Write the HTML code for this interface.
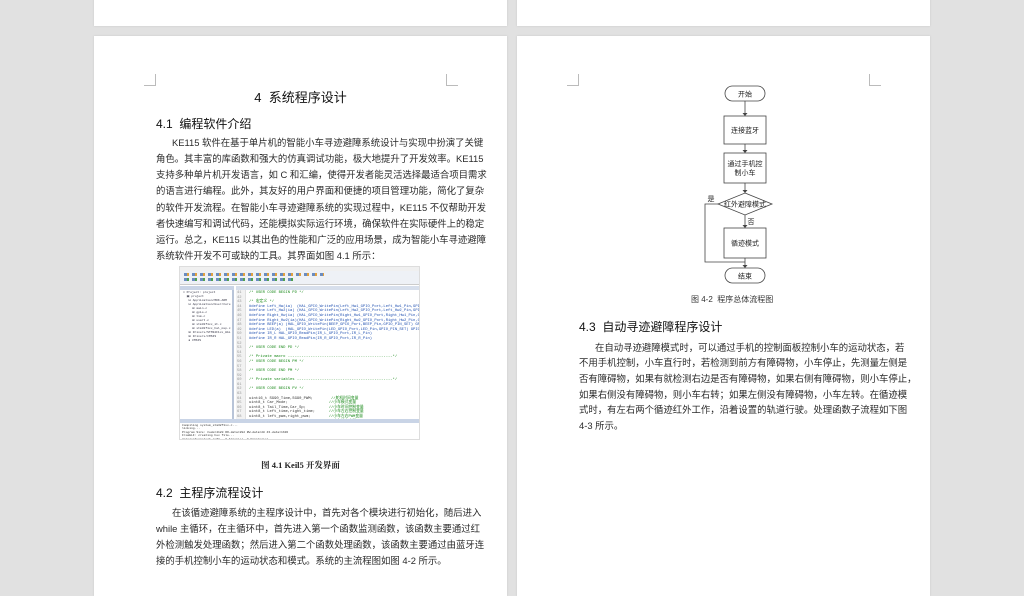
<!DOCTYPE html>
<html><head><meta charset="utf-8"><style>
*{margin:0;padding:0;box-sizing:border-box}
body{width:1024px;height:575px;background:#e1e1e1;position:relative;overflow:hidden;font-family:"Liberation Sans","Noto Sans CJK SC",sans-serif;color:#222}
.pg{position:absolute;background:#fff;box-shadow:0 0 2px #c8c8c8}
.a{position:absolute;white-space:nowrap}
.l{position:absolute;font-size:9.4px;line-height:12px;white-space:nowrap;text-align:justify;text-align-last:justify;color:#2a2a2a}
.l.e{text-align-last:left}
.h{position:absolute;font-family:"Liberation Sans","Noto Sans CJK SC",sans-serif;font-size:12px;color:#111;white-space:nowrap}
.cm{position:absolute;width:12px;height:12px;border-color:#bbb;border-style:solid;border-width:0}
.code{position:absolute;font-family:"Liberation Mono",monospace;font-size:3.8px;line-height:4.6px;white-space:pre;color:#1a8a1a}
</style></head><body>
<div class="pg" style="left:94px;top:-5px;width:413px;height:31px"></div>
<div class="pg" style="left:517px;top:-5px;width:413px;height:31px"></div>
<div class="pg" style="left:94px;top:36px;width:413px;height:560px"></div>
<div class="pg" style="left:517px;top:36px;width:413px;height:560px"></div>
<div class="cm" style="left:144px;top:74px;border-right-width:1px;border-bottom-width:1px"></div>
<div class="cm" style="left:446px;top:74px;border-left-width:1px;border-bottom-width:1px"></div>
<div class="cm" style="left:567px;top:74px;border-right-width:1px;border-bottom-width:1px"></div>
<div class="cm" style="left:869px;top:74px;border-left-width:1px;border-bottom-width:1px"></div>

<div class="h" style="left:0;width:601px;text-align:center;top:87px;font-size:13px">4&nbsp; 系统程序设计</div>
<div class="h" style="left:156px;top:115px">4.1&nbsp; 编程软件介绍</div>
<div class="l" style="left:172px;width:278px;top:137px">KE115 软件在基于单片机的智能小车寻迹避障系统设计与实现中扮演了关键</div>
<div class="l" style="left:156px;width:294px;top:153px">角色。其丰富的库函数和强大的仿真调试功能，极大地提升了开发效率。KE115</div>
<div class="l" style="left:156px;width:294px;top:169px">支持多种单片机开发语言，如 C 和汇编，使得开发者能灵活选择最适合项目需求</div>
<div class="l" style="left:156px;width:294px;top:185px">的语言进行编程。此外，其友好的用户界面和便捷的项目管理功能，简化了复杂</div>
<div class="l" style="left:156px;width:294px;top:202px">的软件开发流程。在智能小车寻迹避障系统的实现过程中，KE115 不仅帮助开发</div>
<div class="l" style="left:156px;width:294px;top:218px">者快速编写和调试代码，还能模拟实际运行环境，确保软件在实际硬件上的稳定</div>
<div class="l" style="left:156px;width:294px;top:234px">运行。总之，KE115 以其出色的性能和广泛的应用场景，成为智能小车寻迹避障</div>
<div class="l e" style="left:156px;width:294px;top:250px">系统软件开发不可或缺的工具。其界面如图 4.1 所示：</div>

<div style="position:absolute;left:179px;top:266px;width:241px;height:174px;background:#fff;border:1px solid #ddd;overflow:hidden">
 <div style="position:absolute;left:0;top:0;width:241px;height:4px;background:#f0f0f0"></div>
 <div style="position:absolute;left:0;top:4px;width:241px;height:14px;background:#eef1f6;border-bottom:1px solid #ccc"></div>
 <div style="position:absolute;left:4px;top:6px;width:140px;height:3px;background:repeating-linear-gradient(90deg,#6a8cc0 0 3px,#e0a040 3px 5px,transparent 5px 8px)"></div>
 <div style="position:absolute;left:4px;top:11px;width:110px;height:3px;background:repeating-linear-gradient(90deg,#6a8cc0 0 3px,#50a050 3px 5px,transparent 5px 8px)"></div>
 <div style="position:absolute;left:0;top:19px;width:54px;height:133px;background:#fff;border-right:2px solid #b8c4d8"></div>
 <div style="position:absolute;left:0;top:19px;width:54px;height:4px;background:#c9d4e6"></div>
 <div class="code" style="left:3px;top:24px;color:#334;font-size:3px;line-height:4px">□ Project: project
  ▣ project
   ⊟ Application/MDK-ARM
   ⊟ Application/User/Core
     ⊞ main.c
     ⊞ gpio.c
     ⊞ tim.c
     ⊞ usart.c
     ⊞ stm32f1xx_it.c
     ⊞ stm32f1xx_hal_msp.c
   ⊞ Drivers/STM32F1xx_HAL
   ⊞ Drivers/CMSIS
   ● CMSIS</div>
 <div style="position:absolute;left:56px;top:19px;width:185px;height:4px;background:#d7dfec"></div>
 <div style="position:absolute;left:56px;top:23px;width:10px;height:129px;background:#f2f2f2;border-right:1px solid #e0e0e0"></div>
 <div style="position:absolute;left:56px;top:23px;width:185px;height:129px;overflow:hidden">
 <div class="code" style="left:1px;top:1px;color:#999">41
42
43
44
45
46
47
48
49
50
51
52
53
54
55
56
57
58
59
60
61
62
63
64
65
66
67
68
69
70
71
72
73
74
75
76
77</div>
 <div class="code" style="left:13px;top:1px">/* USER CODE BEGIN PD */

/* 宏定义 */
<span style="color:#2050b0">#define Left_Hw(ia)  (HAL_GPIO_WritePin(Left_Hw1_GPIO_Port,Left_Hw1_Pin,GPIO_PIN_SET) GPIO</span>
<span style="color:#2050b0">#define Left_Hw2(ia) (HAL_GPIO_WritePin(Left_Hw2_GPIO_Port,Left_Hw2_Pin,GPIO_PIN_SET) GPIO</span>
<span style="color:#2050b0">#define Right_Hw(ia) (HAL_GPIO_WritePin(Right_Hw1_GPIO_Port,Right_Hw1_Pin,GPIO_PIN_SET) GP</span>
<span style="color:#2050b0">#define Right_Hw2(ia)(HAL_GPIO_WritePin(Right_Hw2_GPIO_Port,Right_Hw2_Pin,GPIO_PIN_SET) G</span>
<span style="color:#2050b0">#define BEEP(a) (HAL_GPIO_WritePin(BEEP_GPIO_Port,BEEP_Pin,GPIO_PIN_SET) GPIO_WritePin</span>
<span style="color:#2050b0">#define LED(a)  (HAL_GPIO_WritePin(LED_GPIO_Port,LED_Pin,GPIO_PIN_SET) GPIO_WritePin</span>
<span style="color:#2050b0">#define IR_L HAL_GPIO_ReadPin(IR_L_GPIO_Port,IR_L_Pin)</span>
<span style="color:#2050b0">#define IR_R HAL_GPIO_ReadPin(IR_R_GPIO_Port,IR_R_Pin)</span>

/* USER CODE END PD */

/* Private macro ----------------------------------------------*/
/* USER CODE BEGIN PM */

/* USER CODE END PM */

/* Private variables ------------------------------------------*/

/* USER CODE BEGIN PV */

<span style="color:#333">uint16_t SG90_Time,SG90_PWM;        </span>//舵机时间变量
<span style="color:#333">uint8_t Car_Mode;                  </span>//小车模式变量
<span style="color:#333">uint8_t Tail_Time,Car_Sp;          </span>//小车时间控制变量
<span style="color:#333">uint8_t Left_time,right_time;      </span>//小车左右控制变量
<span style="color:#333">uint8_t left_pwm,right_pwm;        </span>//小车左右PWM变量
<span style="color:#333">uint8_t Car_State;                 </span>//小车状态变量
<span style="color:#333">uint8_t mode;                      </span>//小车避障寻迹模式
<span style="color:#333">uint8_t sett_close;                </span>//小车设置变量
<span style="color:#333">uint8_t start;                     </span>//开始标志位
<span style="color:#333">uint8_t IR_L_hw,IR_R_hw;           </span>//红外寻迹变量

/* USER CODE END PV */

/* Private function prototypes --------------------------------*/</div>
 </div>
 <div style="position:absolute;left:0;top:152px;width:241px;height:4px;background:#c9d4e6"></div>
 <div class="code" style="left:2px;top:157px;color:#333;font-size:3px;line-height:3.4px">Compiling system_stm32f1xx.c...
linking...
Program Size: Code=4120 RO-data=292 RW-data=20 ZI-data=1636
FromELF: creating hex file...
"project\project.axf" - 0 Error(s), 0 Warning(s).</div>
</div>
<div class="a" style="left:0;width:601px;text-align:center;top:459px;font-size:8.5px;font-weight:bold;font-family:'Liberation Serif','Noto Serif CJK SC',serif">图 4.1 Keil5 开发界面</div>

<div class="h" style="left:156px;top:484px">4.2&nbsp; 主程序流程设计</div>
<div class="l" style="left:172px;width:278px;top:507px">在该循迹避障系统的主程序设计中，首先对各个模块进行初始化，随后进入</div>
<div class="l" style="left:156px;width:294px;top:523px">while 主循环，在主循环中，首先进入第一个函数监测函数，该函数主要通过红</div>
<div class="l" style="left:156px;width:294px;top:539px">外检测触发处理函数；然后进入第二个函数处理函数，该函数主要通过由蓝牙连</div>
<div class="l e" style="left:156px;width:294px;top:555px">接的手机控制小车的运动状态和模式。系统的主流程图如图 4-2 所示。</div>

<svg style="position:absolute;left:0;top:0" width="1024" height="575" font-family="Liberation Sans,Noto Sans CJK SC,sans-serif" font-size="7" fill="none" stroke="#444" stroke-width="0.8">
 <rect x="725" y="86" width="40" height="15" rx="7.5" fill="#fff"/>
 <rect x="724" y="116" width="42" height="28" fill="#fff"/>
 <rect x="724" y="153" width="42" height="30" fill="#fff"/>
 <polygon points="745,193 772,204 745,215 718,204" fill="#fff"/>
 <rect x="724" y="228" width="42" height="30" fill="#fff"/>
 <rect x="725" y="268" width="40" height="15" rx="7.5" fill="#fff"/>
 <path d="M745 101V116M745 144V153M745 183V193M745 215V228M745 258V268M718 204H705V262H745"/>
 <path d="M742.5 113l2.5 3 2.5-3zM742.5 150l2.5 3 2.5-3zM742.5 190l2.5 3 2.5-3zM742.5 225l2.5 3 2.5-3zM742.5 265l2.5 3 2.5-3z" fill="#444" stroke="none"/>
 <g fill="#222" stroke="none" text-anchor="middle">
  <text x="745" y="96.5">开始</text>
  <text x="745" y="132.5">连接蓝牙</text>
  <text x="745" y="166">通过手机控</text>
  <text x="745" y="175">制小车</text>
  <text x="745" y="206.5">红外避障模式</text>
  <text x="745" y="245.5">循迹模式</text>
  <text x="745" y="278.5">结束</text>
  <text x="711" y="201">是</text>
  <text x="751" y="224">否</text>
 </g>
</svg>
<div class="a" style="left:691px;top:294px;font-size:8px;color:#333">图 4-2&nbsp; 程序总体流程图</div>

<div class="h" style="left:579px;top:318px">4.3&nbsp; 自动寻迹避障程序设计</div>
<div class="l" style="left:595px;width:278px;top:342px">在自动寻迹避障模式时，可以通过手机的控制面板控制小车的运动状态，若</div>
<div class="l" style="left:579px;width:294px;top:357px">不用手机控制，小车直行时，若检测到前方有障碍物，小车停止，先测量左侧是</div>
<div class="l" style="left:579px;width:294px;top:373px">否有障碍物，如果有就检测右边是否有障碍物，如果右侧有障碍物，则小车停止，</div>
<div class="l" style="left:579px;width:294px;top:389px">如果右侧没有障碍物，则小车右转；如果左侧没有障碍物，小车左转。在循迹模</div>
<div class="l" style="left:579px;width:294px;top:404px">式时，有左右两个循迹红外工作，沿着设置的轨道行驶。处理函数子流程如下图</div>
<div class="l e" style="left:579px;width:294px;top:420px">4-3 所示。</div>
</body></html>
